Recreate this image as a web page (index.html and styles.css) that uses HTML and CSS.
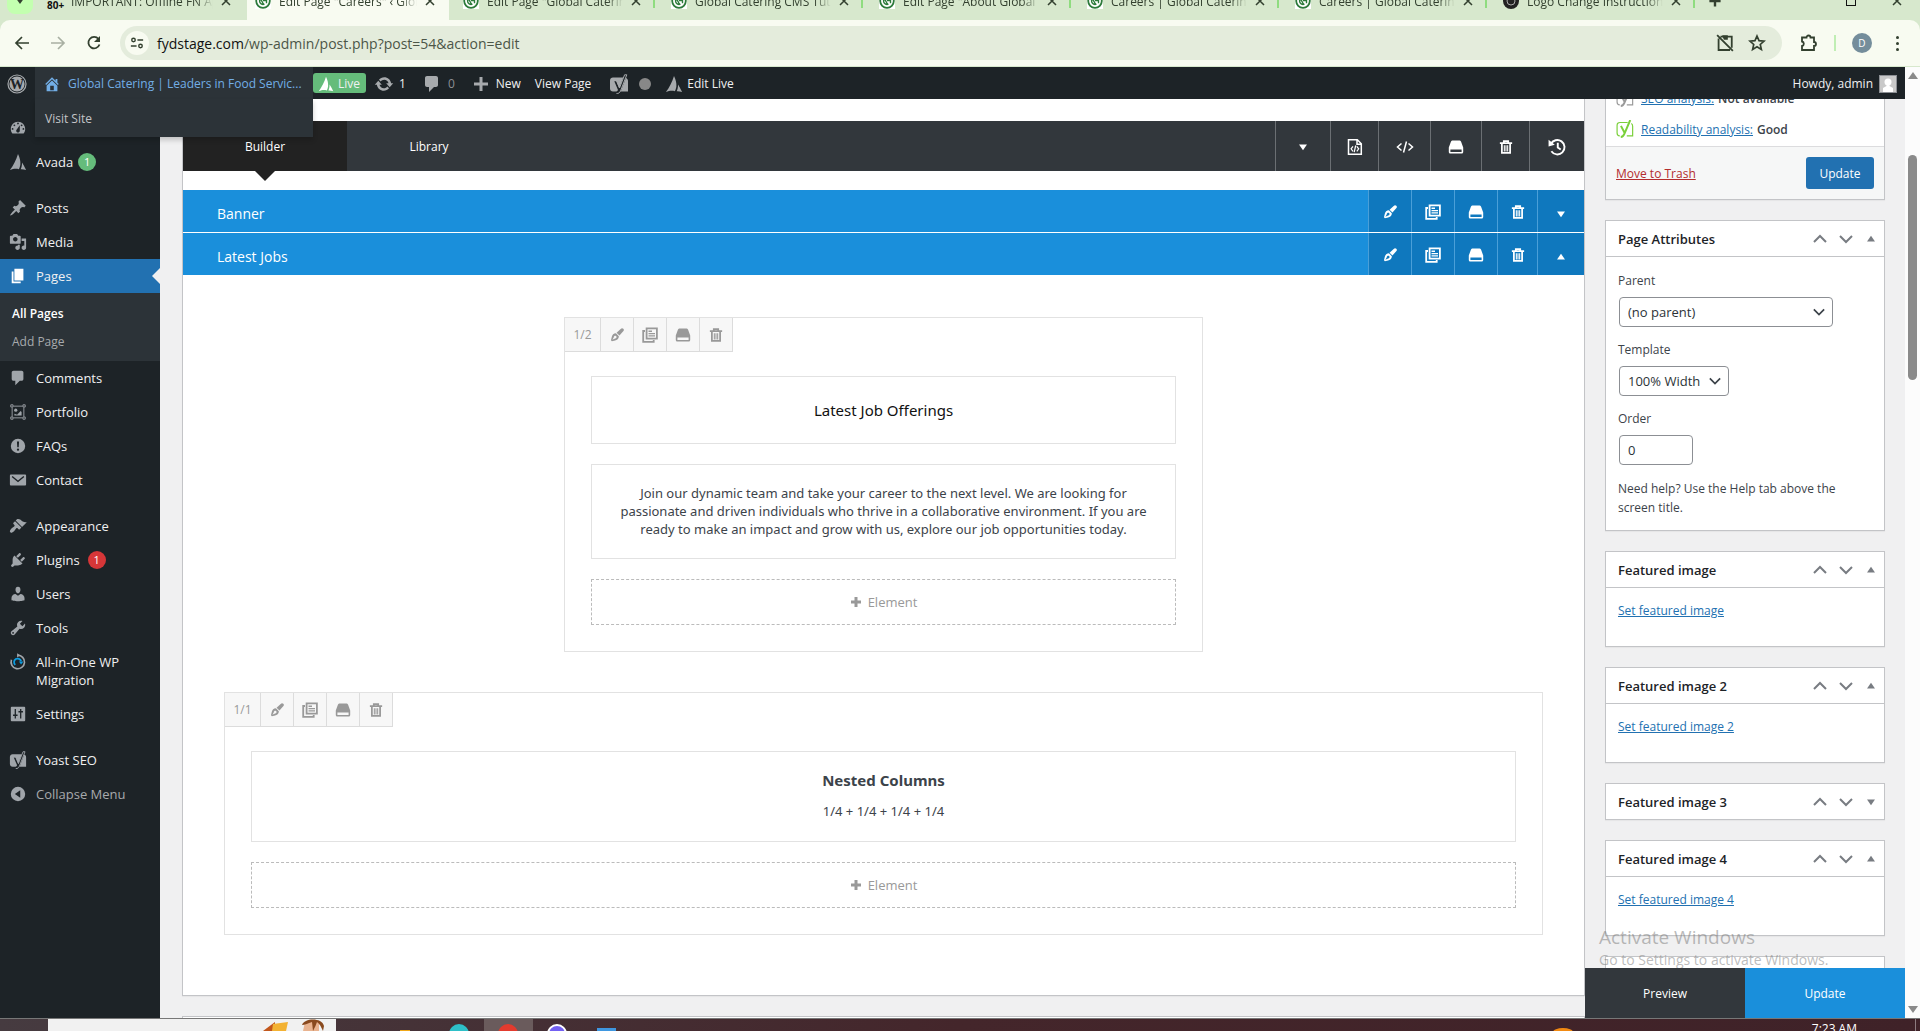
FILE: index.html
```html
<!DOCTYPE html>
<html lang="en">
<head>
  <meta charset="UTF-8" />
  <meta name="viewport" content="width=device-width, initial-scale=1.0"/>
  <title>Edit Page "Careers" ‹ Global Catering</title>
  <link rel="stylesheet" href="styles.css">
</head>
<body>
  <svg class="sprite" aria-hidden="true">
    <!-- admin menu -->
    <symbol id="i-wp" viewBox="0 0 20 20"><circle cx="10" cy="10" r="9" fill="none" stroke="currentColor" stroke-width="1.2"/><circle cx="10" cy="10" r="7.6"/><text class="wp-w" x="10" y="15" text-anchor="middle">W</text></symbol>
    <symbol id="i-dash" viewBox="0 0 20 20"><path fill-rule="evenodd" d="M3.76 16h12.48c1.1-1.37 1.76-3.11 1.76-5 0-4.42-3.58-8-8-8s-8 3.58-8 8c0 1.89.66 3.63 1.76 5zM10 4c.55 0 1 .45 1 1s-.45 1-1 1-1-.45-1-1 .45-1 1-1zM6 6c.55 0 1 .45 1 1s-.45 1-1 1-1-.45-1-1 .45-1 1-1zm8 0c.55 0 1 .45 1 1s-.45 1-1 1-1-.45-1-1 .45-1 1-1zm-5.37 5.55L12 7v6c0 1.1-.9 2-2 2s-2-.9-2-2c0-.57.24-1.08.63-1.45zM4 10c.55 0 1 .45 1 1s-.45 1-1 1-1-.45-1-1 .45-1 1-1zm12 0c.55 0 1 .45 1 1s-.45 1-1 1-1-.45-1-1 .45-1 1-1z"/></symbol>
    <symbol id="i-avada" viewBox="0 0 20 20"><path d="M10 1c2 4 3 8 2.600 12-.3 2-1 3.600-1.600 5-3-.8-6-.8-10 1C4.500 14 8 8 10 1zM14.500 10.500c1.500 2.500 3 5 4.500 8.500-2-.7-4-1-6-.9 1-2.300 1.500-4.600 1.500-7.600z"/></symbol>
    <symbol id="i-pin" viewBox="0 0 20 20"><path d="M10.440 3.020l1.820-1.820 6.360 6.350-1.830 1.820c-1.050-.68-2.480-.57-3.410.36l-.75.75c-.92.93-1.040 2.350-.35 3.410l-1.830 1.820-2.410-2.410-2.800 2.790c-.42.42-3.380 2.710-3.800 2.290s1.860-3.390 2.280-3.810l2.790-2.790L4.100 9.360l1.830-1.820c1.050.69 2.480.57 3.400-.36l.75-.75c.93-.92 1.050-2.350.36-3.410z"/></symbol>
    <symbol id="i-media" viewBox="0 0 20 20"><path fill-rule="evenodd" d="M13 11V4c0-.55-.45-1-1-1h-1.670L9 1H5L3.670 3H2c-.55 0-1 .45-1 1v7c0 .55.45 1 1 1h10c.55 0 1-.45 1-1zM7 4.500c1.380 0 2.500 1.120 2.500 2.500S8.380 9.500 7 9.500 4.500 8.380 4.500 7 5.620 4.500 7 4.500zM14 6h5v10.500c0 1.380-1.120 2.500-2.500 2.500S14 17.880 14 16.500s1.120-2.500 2.500-2.500c.17 0 .34.02.5.05V9h-3V6zm-4 8.050V13h2v3.500c0 1.380-1.120 2.500-2.500 2.500S7 17.880 7 16.500 8.120 14 9.500 14c.17 0 .34.02.5.05z"/></symbol>
    <symbol id="i-page" viewBox="0 0 20 20"><path d="M6 15V2h10v13H6zm-1 1h8v2H3V5h2v11z"/></symbol>
    <symbol id="i-comment" viewBox="0 0 20 20"><path d="M5 2h9c1.100 0 2 .9 2 2v7c0 1.100-.9 2-2 2h-2l-5 5v-5H5c-1.100 0-2-.9-2-2V4c0-1.100.9-2 2-2z"/></symbol>
    <symbol id="i-portfolio" viewBox="0 0 20 20"><path fill="none" stroke="currentColor" d="M3.500 5v10M16.500 5v10M5 3.500h10M5 16.500h10M2 2h2.500v2.500H2zM15.500 2H18v2.500h-2.500zM2 15.500h2.500V18H2zM15.500 15.500H18V18h-2.500z"/><circle cx="7.500" cy="8" r="1.800"/><path d="M6 14v-2l3 1 4-4 1 1v4z"/></symbol>
    <symbol id="i-faq" viewBox="0 0 20 20"><path fill-rule="evenodd" d="M10 2a8 8 0 100 16 8 8 0 000-16zM8.800 5h2.400l-.4 6.500H9.200zM10 12.700a1.300 1.300 0 110 2.600 1.300 1.300 0 010-2.600z"/></symbol>
    <symbol id="i-mail" viewBox="0 0 20 20"><path fill-rule="evenodd" d="M2 4h16c.6 0 1 .4 1 1v10c0 .6-.4 1-1 1H2c-.6 0-1-.4-1-1V5c0-.6.4-1 1-1zm2 1.500L3 6.600l7 6 7-6-1-1.100-6 5z"/></symbol>
    <symbol id="i-brush" viewBox="0 0 20 20"><path d="M14.480 11.060L7.410 3.990l1.500-1.500c.5-.56 2.300-.47 3.510.32 1.210.8 1.430 1.280 2.910 2.100 1.180.64 2.450 1.260 4.450.85zm-.71.71L6.700 4.700 4.930 6.470c-.39.39-.39 1.020 0 1.410l1.060 1.060c.39.39.39 1.030 0 1.420-.6.6-1.430 1.110-2.210 1.690-.35.26-.7.53-1.010.84C1.430 14.230.4 16.080 1.400 17.070c.99 1 2.840-.03 4.180-1.360.31-.31.58-.66.85-1.020.57-.78 1.080-1.610 1.690-2.210.39-.39 1.020-.39 1.410 0l1.060 1.060c.39.39 1.020.39 1.410 0z"/></symbol>
    <symbol id="i-plug" viewBox="0 0 20 20"><path d="M13.110 4.360L9.870 7.600 8 5.730l3.240-3.240c.35-.34 1.050-.2 1.560.32.52.51.66 1.210.31 1.550zm-8 1.770l.91-1.120 9.010 9.010-1.190.84c-.71.71-2.630 1.160-3.820 1.160H6.140L4.900 17.260c-.59.59-1.540.59-2.120 0-.59-.58-.59-1.530 0-2.120l1.240-1.240v-3.880c0-1.130.4-3.190 1.090-3.890zm7.260 3.970l3.240-3.240c.34-.35 1.040-.21 1.550.31.52.51.66 1.210.31 1.550l-3.240 3.250z"/></symbol>
    <symbol id="i-user" viewBox="0 0 20 20"><path d="M10 9.250c-2.270 0-2.730-3.440-2.730-3.440C7 4.020 7.820 2 9.970 2c2.160 0 2.980 2.020 2.710 3.810 0 0-.41 3.440-2.680 3.440zm0 2.570L12.720 10c2.390 0 4.520 2.330 4.520 4.530v2.490s-3.650 1.130-7.240 1.130c-3.650 0-7.240-1.130-7.240-1.130v-2.490c0-2.250 1.940-4.480 4.470-4.480z"/></symbol>
    <symbol id="i-tool" viewBox="0 0 20 20"><path fill-rule="evenodd" d="M16.680 9.770c-1.340 1.340-3.300 1.670-4.950.99l-5.410 6.520c-.99.99-2.590.99-3.580 0s-.99-2.590 0-3.570l6.520-5.420c-.68-1.650-.35-3.610.99-4.950 1.280-1.280 3.120-1.620 4.720-1.060l-2.890 2.890 2.820 2.820 2.860-2.870c.53 1.580.18 3.390-1.080 4.650zM3.810 16.210c.4.39 1.040.39 1.430 0 .4-.4.4-1.040 0-1.430-.39-.4-1.030-.4-1.430 0-.39.39-.39 1.030 0 1.430z"/></symbol>
    <symbol id="i-migrate" viewBox="0 0 20 20"><path fill="none" stroke="currentColor" stroke-width="1.800" d="M9.500 2.500a7.500 7.500 0 11-6.800 5"/><path d="M9 .2l3.500 2.400L9 5z"/><path fill="none" stroke="#0d9ce0" stroke-width="2" d="M7 13.200a4 4 0 116.500-4"/><path fill="#0d9ce0" d="M11 9.500h5l-2.600 3.200z"/></symbol>
    <symbol id="i-sliders" viewBox="0 0 20 20"><path fill-rule="evenodd" d="M3 2h14c.6 0 1 .4 1 1v14c0 .6-.4 1-1 1H3c-.6 0-1-.4-1-1V3c0-.6.4-1 1-1zm3.300 2.500v6H4.500v1.600h1.800v3h1.400v-3h1.800v-1.600H7.700v-6zm6 0v2.200h-1.800v1.600h1.800v6.800h1.400V8.300h1.800V6.700h-1.800V4.500z"/></symbol>
    <symbol id="i-yoast" viewBox="0 0 20 20"><path fill-rule="evenodd" d="M4 3.500h10.300l-4 10.700-2.800-7H5.300l3.700 8.700c-.7 1.300-1.200 1.600-2.600 1.600H4c-1.700 0-3-1.300-3-3v-8c0-1.700 1.300-3 3-3zM17 4c1.200.5 2 1.500 2 3v10.500h-7.300z"/><path fill="none" stroke="currentColor" stroke-width="1" d="M4.500 6.500h2.800l3.200 7.500L15.600.8h2.200L11.500 17c-.8 1.900-2 2.600-4 2.500"/></symbol>
    <symbol id="i-yoast-line" viewBox="0 0 20 20"><g fill="none" stroke="currentColor"><path stroke-width="1.300" d="M13 2.800H4.500C2.300 2.800 1.200 4 1.200 6v8.500c0 2 1 3.200 3 3.200M12 17.700h6.500V7c0-1.500-.5-2.700-1.500-3.200"/><path stroke-width="2.200" d="M5.500 6.500l4.300 8.200M15.800 0L9.300 15.500c-.9 2.200-2 3.300-4 3.400"/></g></symbol>
    <symbol id="i-collapse" viewBox="0 0 20 20"><path fill-rule="evenodd" d="M10 2a8 8 0 100 16 8 8 0 000-16zm2.500 3.800v8.400L6.500 10z"/></symbol>
    <symbol id="i-home" viewBox="0 0 20 20"><path fill-rule="evenodd" d="M16 8.500l1.530 1.530-1.060 1.060L10 4.600l-6.470 6.490-1.060-1.060L10 2.500l4 4v-2h2v4zm-6-2.460l6 5.990V18H4v-5.970zM12 17v-5H8v5h4z"/></symbol>
    <symbol id="i-update" viewBox="0 0 20 20"><path d="M10.200 3.280c3.530 0 6.430 2.610 6.920 6h2.080l-3.500 4-3.500-4h2.320c-.45-1.970-2.210-3.450-4.320-3.450-1.450 0-2.730.71-3.540 1.780L4.950 5.660C6.230 4.200 8.110 3.280 10.200 3.280zm-.4 13.440c-3.520 0-6.430-2.610-6.920-6H.8l3.500-4c1.170 1.330 2.330 2.670 3.500 4H5.480c.45 1.970 2.210 3.450 4.320 3.450 1.450 0 2.730-.71 3.540-1.780l1.710 1.950c-1.280 1.460-3.150 2.380-5.250 2.380z"/></symbol>
    <symbol id="i-plus" viewBox="0 0 20 20"><path d="M8.500 3h3v5.500H17v3h-5.500V17h-3v-5.500H3v-3h5.500z"/></symbol>

    <!-- builder tools -->
    <symbol id="i-paint" viewBox="0 0 16 16"><path fill-rule="evenodd" d="M15.200.9c1 .9.700 2-.1 2.900L10.800 8.600 7.500 5.400 12.200 1c.9-.8 2.100-1 3-.1zM6.800 6l3.300 3.300c.2 2.700-2 4.600-4.300 5l-3.600.7-1.100-.9.900-3.900C2.500 8 4.200 6 6.800 6zM6 8.900c-.9 0-1.600.7-1.600 1.500 0 .4-.3.900-.8 1.500L2.700 13.400l1.800-.9c.5-.4 1-.6 1.500-.6.900 0 1.500-.7 1.500-1.500S6.900 8.900 6 8.900z"/></symbol>
    <symbol id="i-clone" viewBox="0 0 16 16"><path fill="none" stroke="currentColor" stroke-width="1.800" d="M4.600 1.400h10.300v10.200H4.600zM3 4H1.200v10.800h10.500V13"/><path d="M6.500 3.600H10V5H6.500zM6.500 5.900h6.500v1.300H6.500zM6.500 8.200h6.500v1.300H6.500z"/></symbol>
    <symbol id="i-drive" viewBox="0 0 16 16"><path fill-rule="evenodd" d="M5 1.500h6c1 0 1.800.5 2.200 1.400l2 5.600v4.500c0 .8-.6 1.500-1.400 1.500H2.200C1.400 14.500.8 13.800.8 13V8.500l2-5.600C3.200 2 4 1.500 5 1.500zM2.400 10.600v2.300h11.200v-2.300z"/></symbol>
    <symbol id="i-trash" viewBox="0 0 16 16"><path fill="none" stroke="currentColor" stroke-width="2" d="M1 3.500h14M5.500 3V1.300h5V3M3.300 4v10.700h9.400V4"/><path fill="none" stroke="currentColor" stroke-width="1.200" d="M6.100 6v7M8 6v7M9.900 6v7"/></symbol>
    <symbol id="i-file" viewBox="0 0 16 16"><path fill="none" stroke="currentColor" stroke-width="1.500" d="M1.500.8h8.800l4 4v10.400H1.500zM10 1v4.200h4"/><path fill="none" stroke="currentColor" stroke-width="1.200" d="M6 7.300L4.100 9.800 6 12.300M9.800 7.300l1.900 2.500-1.900 2.500M8.700 6.500l-1.500 6.700"/></symbol>
    <symbol id="i-code" viewBox="0 0 18 16"><path fill="none" stroke="currentColor" stroke-width="1.500" d="M5.500 4.500L1.500 8l4 3.500M12.500 4.500l4 3.500-4 3.500M10.500 2.500l-3 11"/></symbol>
    <symbol id="i-history" viewBox="0 0 16 16"><path fill="none" stroke="currentColor" stroke-width="1.700" d="M2.500 5.500A6.400 6.400 0 113 11.800M8.700 4.200v4.300l2.600 1.700"/><path d="M.5 1.500v6L6 6z"/></symbol>
    <symbol id="i-add" viewBox="0 0 12 12"><path d="M4.500 1h3v3.500H11v3H7.500V11h-3V7.500H1v-3h3.500z"/></symbol>
    <symbol id="i-down" viewBox="0 0 10 10"><path d="M0 2h10L5 9z"/></symbol>
    <symbol id="i-up" viewBox="0 0 10 10"><path d="M0 8h10L5 1z"/></symbol>
    <symbol id="i-chev-down" viewBox="0 0 14 14"><path fill="none" stroke="currentColor" stroke-width="2" d="M1 4l6 6 6-6"/></symbol>
    <symbol id="i-chev-up" viewBox="0 0 14 14"><path fill="none" stroke="currentColor" stroke-width="2" d="M1 10l6-6 6 6"/></symbol>

    <!-- browser -->
    <symbol id="i-gc" viewBox="0 0 16 16"><path fill="#fff" d="M0 0h16v16H0z"/><circle cx="8" cy="8" r="6.800" fill="none" stroke="#2c7a3a" stroke-width="1.800"/><path fill="none" stroke="#2c7a3a" stroke-width="1.400" d="M9.500 4.800a3.500 3.500 0 100 6.400M8 7.500h3.500v2.800M5 5.500c2 2 2 4 4 6"/></symbol>
    <symbol id="i-x" viewBox="0 0 10 10"><path fill="none" stroke="currentColor" stroke-width="1.500" d="M1 1l8 8M9 1L1 9"/></symbol>
    <symbol id="i-back" viewBox="0 0 16 16"><path fill="none" stroke="currentColor" stroke-width="1.700" d="M15 8H2.500M8 2L2 8l6 6"/></symbol>
    <symbol id="i-fwd" viewBox="0 0 16 16"><path fill="none" stroke="currentColor" stroke-width="1.700" d="M1 8h12.500M8 2l6 6-6 6"/></symbol>
    <symbol id="i-reload" viewBox="0 0 16 16"><path fill="none" stroke="currentColor" stroke-width="1.800" d="M13.500 9.500A5.700 5.700 0 1112.500 4"/><path d="M14 1v6H8z"/></symbol>
    <symbol id="i-tune" viewBox="0 0 16 16"><g fill="none" stroke="currentColor" stroke-width="1.600"><circle cx="4" cy="4.500" r="2"/><circle cx="12" cy="11.500" r="2"/><path d="M8.500 4.500H15M1 11.500h6.500"/></g></symbol>
    <symbol id="i-clip" viewBox="0 0 16 16"><path fill="none" stroke="currentColor" stroke-width="1.600" d="M4 2.300h10v10M12.500 14.200H2.300V4M1 1l14 14"/><path d="M5.500 1h5v4H7z"/></symbol>
    <symbol id="i-star" viewBox="0 0 16 16"><path fill="none" stroke="currentColor" stroke-width="1.500" d="M8 1.800l1.800 4.100 4.500.4-3.400 3 1 4.400L8 11.400l-3.900 2.300 1-4.400-3.400-3 4.500-.4z"/></symbol>
    <symbol id="i-puzzle" viewBox="0 0 18 18"><path fill="none" stroke="currentColor" stroke-width="1.800" d="M2 3.500h4.500a2 2 0 014 0H14V8a2 2 0 010 4v4H2v-4a2.300 2.300 0 000-4.500z"/></symbol>
  </svg>

  <header class="browser">
    <div class="tab-strip">
      <button class="tab-search" aria-label="Search tabs"><svg class="ico10"><use href="#i-down"/></svg></button>
      <div class="tab tab-first"><b class="count">80+</b><span class="tab-title">IMPORTANT: Offline FN Ap</span><svg class="ico10"><use href="#i-x"/></svg></div>
      <div class="tab tab-active"><svg class="ico16"><use href="#i-gc"/></svg><span class="tab-title">Edit Page "Careers" ‹ Global</span><svg class="ico10"><use href="#i-x"/></svg></div>
      <div class="tab"><svg class="ico16"><use href="#i-gc"/></svg><span class="tab-title">Edit Page "Global Catering C</span><svg class="ico10"><use href="#i-x"/></svg></div>
      <div class="tab"><svg class="ico16"><use href="#i-gc"/></svg><span class="tab-title">Global Catering CMS Tutorial</span><svg class="ico10"><use href="#i-x"/></svg></div>
      <div class="tab"><svg class="ico16"><use href="#i-gc"/></svg><span class="tab-title">Edit Page "About Global Cat</span><svg class="ico10"><use href="#i-x"/></svg></div>
      <div class="tab"><svg class="ico16"><use href="#i-gc"/></svg><span class="tab-title">Careers | Global Catering |</span><svg class="ico10"><use href="#i-x"/></svg></div>
      <div class="tab"><svg class="ico16"><use href="#i-gc"/></svg><span class="tab-title">Careers | Global Catering |</span><svg class="ico10"><use href="#i-x"/></svg></div>
      <div class="tab"><svg class="ico16" viewBox="0 0 16 16"><circle cx="8" cy="8" r="8" fill="#222"/><circle cx="8" cy="8" r="4" fill="none" stroke="#aaa"/></svg><span class="tab-title">Logo Change Instructions</span><svg class="ico10"><use href="#i-x"/></svg></div>
      <button class="tab-new" aria-label="New tab"><svg class="ico16"><use href="#i-plus"/></svg></button>
      <div class="win-buttons"><span class="win-max"></span><svg class="ico10"><use href="#i-x"/></svg></div>
    </div>
    <div class="toolbar">
      <button aria-label="Back"><svg class="ico16"><use href="#i-back"/></svg></button>
      <button class="off" aria-label="Forward"><svg class="ico16"><use href="#i-fwd"/></svg></button>
      <button aria-label="Reload"><svg class="ico16"><use href="#i-reload"/></svg></button>
      <div class="omnibox">
        <span class="tune"><svg class="ico16"><use href="#i-tune"/></svg></span>
        <span class="url"><b>fydstage.com</b>/wp-admin/post.php?post=54&amp;action=edit</span>
        <svg class="ico18"><use href="#i-clip"/></svg>
        <svg class="ico18"><use href="#i-star"/></svg>
      </div>
      <svg class="ico18 puzzle"><use href="#i-puzzle"/></svg>
      <span class="divider"></span>
      <span class="profile">D</span>
      <span class="dots"><i></i><i></i><i></i></span>
    </div>
  </header>

  <div class="viewport">
    <div class="wp">
      <nav class="adminbar">
        <a href="#" class="bar-wp" aria-label="About WordPress"><svg class="ico20"><use href="#i-wp"/></svg></a>
        <div class="bar-site">
          <a href="#"><svg class="ico18"><use href="#i-home"/></svg>Global Catering | Leaders in Food Servic...</a>
          <div class="bar-menu"><a href="#">Visit Site</a></div>
        </div>
        <a href="#" class="live"><svg class="ico16"><use href="#i-avada"/></svg>Live</a>
        <a href="#" class="bar-updates"><svg class="ico20"><use href="#i-update"/></svg>1</a>
        <a href="#" class="bar-comments"><svg class="ico20"><use href="#i-comment"/></svg>0</a>
        <a href="#" class="bar-new"><svg class="ico20"><use href="#i-plus"/></svg>New</a>
        <a href="#" class="bar-view">View Page</a>
        <a href="#" class="bar-yoast"><svg class="ico20"><use href="#i-yoast"/></svg><i class="score"></i></a>
        <a href="#" class="bar-edit"><svg class="ico18"><use href="#i-avada"/></svg>Edit Live</a>
        <a href="#" class="howdy">Howdy, admin<svg class="avatar" viewBox="0 0 16 16"><path fill="#c9c9c9" d="M0 0h16v16H0z"/><circle cx="8" cy="6" r="3.500" fill="#fff"/><path fill="#fff" d="M6.500 8h3v2l3.500 2v4H3v-4l3.500-2z"/></svg></a>
      </nav>

      <div class="wp-body">
        <ul class="menu">
          <li><a href="#" aria-label="Dashboard"><svg class="ico20"><use href="#i-dash"/></svg></a></li>
          <li><a href="#"><svg class="ico20"><use href="#i-avada"/></svg>Avada<span class="bubble green">1</span></a></li>
          <li class="sep"></li>
          <li><a href="#"><svg class="ico20"><use href="#i-pin"/></svg>Posts</a></li>
          <li><a href="#"><svg class="ico20"><use href="#i-media"/></svg>Media</a></li>
          <li class="current"><a href="#"><svg class="ico20"><use href="#i-page"/></svg>Pages</a>
            <ul class="submenu">
              <li><a href="#" class="on">All Pages</a></li>
              <li><a href="#">Add Page</a></li>
            </ul>
          </li>
          <li><a href="#"><svg class="ico20"><use href="#i-comment"/></svg>Comments</a></li>
          <li><a href="#"><svg class="ico20"><use href="#i-portfolio"/></svg>Portfolio</a></li>
          <li><a href="#"><svg class="ico20"><use href="#i-faq"/></svg>FAQs</a></li>
          <li><a href="#"><svg class="ico20"><use href="#i-mail"/></svg>Contact</a></li>
          <li class="sep"></li>
          <li><a href="#"><svg class="ico20"><use href="#i-brush"/></svg>Appearance</a></li>
          <li><a href="#"><svg class="ico20"><use href="#i-plug"/></svg>Plugins<span class="bubble">1</span></a></li>
          <li><a href="#"><svg class="ico20"><use href="#i-user"/></svg>Users</a></li>
          <li><a href="#"><svg class="ico20"><use href="#i-tool"/></svg>Tools</a></li>
          <li><a href="#"><svg class="ico20"><use href="#i-migrate"/></svg>All-in-One WP Migration</a></li>
          <li><a href="#"><svg class="ico20"><use href="#i-sliders"/></svg>Settings</a></li>
          <li class="sep"></li>
          <li><a href="#"><svg class="ico20"><use href="#i-yoast"/></svg>Yoast SEO</a></li>
          <li class="collapse"><a href="#"><svg class="ico20"><use href="#i-collapse"/></svg>Collapse Menu</a></li>
        </ul>

        <main class="content">
          <section class="builder">
            <div class="builder-head">
              <button class="builder-tab active">Builder</button>
              <button class="builder-tab">Library</button>
              <div class="head-tools">
                <button aria-label="Toggle all"><svg class="ico8"><use href="#i-down"/></svg></button>
                <button aria-label="Page CSS"><svg class="ico16"><use href="#i-file"/></svg></button>
                <button aria-label="Shortcodes"><svg class="ico18"><use href="#i-code"/></svg></button>
                <button aria-label="Save"><svg class="ico16"><use href="#i-drive"/></svg></button>
                <button aria-label="Delete"><svg class="ico14"><use href="#i-trash"/></svg></button>
                <button aria-label="History"><svg class="ico18"><use href="#i-history"/></svg></button>
              </div>
            </div>

            <div class="bar">
              <h2>Banner</h2>
              <div class="bar-tools">
                <button aria-label="Edit"><svg class="ico14"><use href="#i-paint"/></svg></button>
                <button aria-label="Clone"><svg class="ico16"><use href="#i-clone"/></svg></button>
                <button aria-label="Save"><svg class="ico16"><use href="#i-drive"/></svg></button>
                <button aria-label="Delete"><svg class="ico14"><use href="#i-trash"/></svg></button>
                <button aria-label="Expand"><svg class="ico8"><use href="#i-down"/></svg></button>
              </div>
            </div>
            <div class="bar">
              <h2>Latest Jobs</h2>
              <div class="bar-tools">
                <button aria-label="Edit"><svg class="ico14"><use href="#i-paint"/></svg></button>
                <button aria-label="Clone"><svg class="ico16"><use href="#i-clone"/></svg></button>
                <button aria-label="Save"><svg class="ico16"><use href="#i-drive"/></svg></button>
                <button aria-label="Delete"><svg class="ico14"><use href="#i-trash"/></svg></button>
                <button aria-label="Collapse"><svg class="ico8"><use href="#i-up"/></svg></button>
              </div>
            </div>

            <div class="columns">
              <div class="column half">
                <div class="column-tools">
                  <button class="size">1/2</button>
                  <button aria-label="Edit"><svg class="ico14"><use href="#i-paint"/></svg></button>
                  <button aria-label="Clone"><svg class="ico16"><use href="#i-clone"/></svg></button>
                  <button aria-label="Save"><svg class="ico16"><use href="#i-drive"/></svg></button>
                  <button aria-label="Delete"><svg class="ico14"><use href="#i-trash"/></svg></button>
                </div>
                <div class="column-body">
                  <div class="element title-element">Latest Job Offerings</div>
                  <div class="element text-element">Join our dynamic team and take your career to the next level. We are looking for passionate and driven individuals who thrive in a collaborative environment. If you are ready to make an impact and grow with us, explore our job opportunities today.</div>
                  <button class="add-element"><svg class="ico12"><use href="#i-add"/></svg>Element</button>
                </div>
              </div>

              <div class="column">
                <div class="column-tools">
                  <button class="size">1/1</button>
                  <button aria-label="Edit"><svg class="ico14"><use href="#i-paint"/></svg></button>
                  <button aria-label="Clone"><svg class="ico16"><use href="#i-clone"/></svg></button>
                  <button aria-label="Save"><svg class="ico16"><use href="#i-drive"/></svg></button>
                  <button aria-label="Delete"><svg class="ico14"><use href="#i-trash"/></svg></button>
                </div>
                <div class="column-body">
                  <div class="element nested-element">
                    <h4>Nested Columns</h4>
                    <p>1/4 + 1/4 + 1/4 + 1/4</p>
                  </div>
                  <button class="add-element"><svg class="ico12"><use href="#i-add"/></svg>Element</button>
                </div>
              </div>
            </div>
          </section>
          <section class="next-box"></section>
        </main>

        <aside class="side">
          <section class="postbox publish">
            <p class="analysis"><svg class="ico18 grey"><use href="#i-yoast-line"/></svg><a href="#">SEO analysis:</a> <b>Not available</b></p>
            <p class="analysis"><svg class="ico18 good"><use href="#i-yoast-line"/></svg><a href="#">Readability analysis:</a> <b>Good</b></p>
            <div class="publish-actions">
              <a href="#" class="trash-link">Move to Trash</a>
              <button class="btn-update">Update</button>
            </div>
          </section>

          <section class="postbox">
            <div class="box-head"><h2>Page Attributes</h2><svg class="ico14"><use href="#i-chev-up"/></svg><svg class="ico14"><use href="#i-chev-down"/></svg><svg class="ico8"><use href="#i-up"/></svg></div>
            <div class="box-body attributes">
              <label for="parent">Parent</label>
              <div class="select select-parent"><select id="parent"><option>(no parent)</option></select><svg class="ico12"><use href="#i-chev-down"/></svg></div>
              <label for="template">Template</label>
              <div class="select select-template"><select id="template"><option>100% Width</option></select><svg class="ico12"><use href="#i-chev-down"/></svg></div>
              <label for="order">Order</label>
              <input type="text" id="order" value="0" />
              <p>Need help? Use the Help tab above the screen title.</p>
            </div>
          </section>

          <section class="postbox">
            <div class="box-head"><h2>Featured image</h2><svg class="ico14"><use href="#i-chev-up"/></svg><svg class="ico14"><use href="#i-chev-down"/></svg><svg class="ico8"><use href="#i-up"/></svg></div>
            <div class="box-body featured"><a href="#">Set featured image</a></div>
          </section>
          <section class="postbox">
            <div class="box-head"><h2>Featured image 2</h2><svg class="ico14"><use href="#i-chev-up"/></svg><svg class="ico14"><use href="#i-chev-down"/></svg><svg class="ico8"><use href="#i-up"/></svg></div>
            <div class="box-body featured"><a href="#">Set featured image 2</a></div>
          </section>
          <section class="postbox closed">
            <div class="box-head"><h2>Featured image 3</h2><svg class="ico14"><use href="#i-chev-up"/></svg><svg class="ico14"><use href="#i-chev-down"/></svg><svg class="ico8"><use href="#i-down"/></svg></div>
          </section>
          <section class="postbox">
            <div class="box-head"><h2>Featured image 4</h2><svg class="ico14"><use href="#i-chev-up"/></svg><svg class="ico14"><use href="#i-chev-down"/></svg><svg class="ico8"><use href="#i-up"/></svg></div>
            <div class="box-body featured"><a href="#">Set featured image 4</a></div>
          </section>
          <section class="postbox"><div class="box-head"></div></section>
        </aside>
      </div>

      <div class="sticky">
        <div class="watermark"><strong>Activate Windows</strong><span>Go to Settings to activate Windows.</span></div>
        <div class="sticky-buttons">
          <button>Preview</button>
          <button class="primary">Update</button>
        </div>
      </div>
    </div>

    <div class="scrollbar">
      <svg class="ico10"><use href="#i-up"/></svg>
      <div class="track"><div class="thumb"></div></div>
      <svg class="ico10"><use href="#i-down"/></svg>
    </div>
  </div>

  <footer class="taskbar">
    <div class="task-search">
      <svg viewBox="0 0 64 12"><path fill="#c2571c" d="M0 12L12 3v9z"/><path fill="#f3b233" d="M10 5l15-2-2 9H9z"/><path fill="#e9b38f" d="M42 3h14v9H40z"/><path fill="#8a4a1e" d="M39 6c2-7 20-8 22 1l-1 5c-2-4-3-7-6-9-1 3-2 5-4 9l-1-9c-4 1-7 3-10 3z"/></svg>
    </div>
    <div class="tasks">
      <span><svg viewBox="0 0 49 12"><path fill="#f0a818" d="M14 11h10v1H14z"/></svg></span>
      <span><svg viewBox="0 0 49 12"><circle cx="24" cy="15" r="10" fill="#2ec0c8"/></svg></span>
      <span class="on"><svg viewBox="0 0 49 12"><circle cx="24" cy="15" r="10" fill="#e33b2e"/></svg></span>
      <span><svg viewBox="0 0 49 12"><circle cx="24" cy="15" r="9" fill="#7360f2" stroke="#fff" stroke-width="2"/></svg></span>
      <span><svg viewBox="0 0 49 12"><path fill="#3f97e0" d="M15 9h19v3H15z"/></svg></span>
    </div>
    <svg class="tray" viewBox="0 0 24 12"><ellipse cx="12" cy="13" rx="10" ry="4" fill="#f28a12"/></svg>
    <time>7:23 AM</time>
    <span class="show-desktop"></span>
  </footer>
</body>
</html>
```

FILE: styles.css
```css
:root {
  --dark: #1d2327;
  --dark-2: #2c3338;
  --blue: #1a8fdb;
  --blue-2: #0f78be;
  --wp-blue: #2271b1;
  --border: #c3c4c7;
  --light: #e2e2e2;
  --text: #3c434a;
}

* {
  box-sizing: border-box;
}

body {
  display: flex;
  flex-direction: column;
  height: 100vh;
  margin: 0;
  overflow: hidden;
  font-family: "Open Sans", "Noto Sans", sans-serif;
  font-size: 12px;
  color: var(--text);
  background: #f0f0f1;
}

a {
  color: var(--wp-blue);
}

button {
  display: flex;
  align-items: center;
  justify-content: center;
  padding: 0;
  border: 0;
  background: none;
  color: inherit;
  font: inherit;
  cursor: pointer;
}

h2, h4, p, ul {
  margin: 0;
  padding: 0;
}

ul {
  list-style: none;
}

svg {
  flex: none;
  fill: currentColor;
}

.sprite {
  position: absolute;
  width: 0;
  height: 0;
}

.wp-w {
  font: bold 14px "Liberation Serif", serif;
  fill: var(--dark);
}

.ico8 { width: 8px; height: 8px; }
.ico10 { width: 10px; height: 10px; }
.ico12 { width: 12px; height: 12px; }
.ico14 { width: 14px; height: 14px; }
.ico16 { width: 16px; height: 16px; }
.ico18 { width: 18px; height: 18px; }
.ico20 { width: 20px; height: 20px; }

/* browser */
.browser {
  flex: none;
  background: #d7e8cd;
  color: #33402f;
}

.tab-strip {
  display: flex;
  align-items: flex-end;
  height: 20px;
  overflow: hidden;
}

.tab-search {
  width: 26px;
  height: 28px;
  margin: 0 6px 6px 7px;
  border-radius: 8px;
  background: #c3ffb0;
}

.tab {
  display: flex;
  align-items: center;
  gap: 8px;
  flex: 0 1 208px;
  min-width: 0;
  height: 38px;
  padding: 0 16px 0 8px;
}

.tab + .tab:not(.tab-active) {
  padding-left: 14px;
}

.tab-active {
  flex-basis: 202px;
  padding-right: 14px;
  border-radius: 10px 10px 0 0;
  background: #f8fbf1;
}

.tab:not(.tab-first):not(.tab-active) {
  background: linear-gradient(#8fdc7f, #8fdc7f) right 2px top / 2px 26px no-repeat;
}

.tab-title {
  flex: 1;
  overflow: hidden;
  white-space: nowrap;
  -webkit-mask-image: linear-gradient(90deg, #000 88%, transparent);
  mask-image: linear-gradient(90deg, #000 88%, transparent);
}

.count {
  width: 16px;
  padding-top: 8px;
  font-size: 10px;
  color: #111;
}

.tab-new {
  width: 36px;
  height: 38px;
}

.win-buttons {
  display: flex;
  align-items: center;
  gap: 36px;
  height: 38px;
  margin-left: auto;
  padding-right: 18px;
}

.win-max {
  width: 10px;
  height: 10px;
  border: 1px solid #111;
}

.toolbar {
  display: flex;
  align-items: center;
  height: 47px;
  padding: 0 21px 0 14px;
  border-bottom: 1px solid #d7e8cd;
  border-radius: 10px 10px 0 0;
  background: #f8fbf1;
}

.toolbar > button {
  width: 16px;
  margin-right: 20px;
}

.toolbar > .off {
  color: #a9b0a3;
}

.toolbar > button:nth-child(3) {
  margin-right: 18px;
}

.omnibox {
  display: flex;
  align-items: center;
  flex: 1;
  gap: 14px;
  height: 34px;
  padding: 0 16px 0 5px;
  border-radius: 17px;
  background: #e4ecdc;
}

.tune {
  display: flex;
  align-items: center;
  justify-content: center;
  width: 24px;
  height: 24px;
  border-radius: 50%;
  background: #f8fbf1;
}

.tune svg {
  width: 14px;
  height: 14px;
}

.url {
  flex: 1;
  margin-left: -6px;
  font-size: 14px;
  color: #4c5648;
}

.url b {
  font-weight: 400;
  color: #111;
}

.puzzle {
  margin-left: 18px;
}

.divider {
  width: 2px;
  height: 16px;
  margin: 0 16px;
  background: #c0eeb4;
}

.profile {
  width: 20px;
  height: 20px;
  border-radius: 50%;
  background: #748d9b;
  color: #fff;
  font-size: 10px;
  line-height: 20px;
  text-align: center;
}

.dots {
  display: flex;
  flex-direction: column;
  gap: 3px;
  margin-left: 24px;
}

.dots i {
  width: 3px;
  height: 3px;
  border-radius: 50%;
  background: #33402f;
}

/* page */
.viewport {
  display: flex;
  flex: 1;
  min-height: 0;
}

.wp {
  position: relative;
  display: flex;
  flex-direction: column;
  flex: 1;
  min-width: 0;
}

.adminbar {
  position: relative;
  z-index: 5;
  display: flex;
  align-items: center;
  flex: none;
  height: 32px;
  padding: 0 8px 0 7px;
  background: var(--dark);
}

.adminbar a {
  display: flex;
  align-items: center;
  height: 32px;
  padding-top: 1px;
  color: #f0f0f1;
  line-height: 32px;
  text-decoration: none;
}

.adminbar svg {
  color: #a7aaad;
}

.bar-wp {
  width: 28px;
}

.bar-site {
  position: relative;
  width: 278px;
  background: var(--dark-2);
}

.bar-site > a {
  gap: 7px;
  padding-left: 8px;
}

.adminbar .bar-site > a,
.adminbar .bar-site > a svg {
  color: #72aee6;
}

.bar-menu {
  position: absolute;
  top: 32px;
  left: 0;
  width: 100%;
  padding: 3px 10px;
  background: var(--dark-2);
  box-shadow: 0 3px 5px rgba(0, 0, 0, 0.2);
}

.adminbar .bar-menu a {
  padding-top: 2px;
  color: #c3c4c7;
}

.adminbar .live {
  gap: 4px;
  height: 20px;
  width: 53px;
  padding-left: 5px;
  border-radius: 3px;
  background: #65bc7b;
}

.adminbar .live svg {
  color: #fff;
}

.bar-updates {
  gap: 5px;
  margin-left: 8px;
}

.adminbar .bar-comments {
  gap: 6px;
  margin-left: 16px;
  color: #8c8f94;
}

.bar-new {
  gap: 5px;
  margin-left: 16px;
}

.bar-view {
  margin-left: 14px;
}

.bar-yoast {
  gap: 10px;
  margin-left: 18px;
}

.score {
  width: 12px;
  height: 12px;
  border-radius: 50%;
  background: #888;
}

.bar-edit {
  gap: 4px;
  margin-left: 14px;
}

.howdy {
  gap: 6px;
  margin-left: auto;
}

.avatar {
  width: 18px;
  height: 18px;
  border: 1px solid #8c8f94;
}

.wp-body {
  display: flex;
  flex: 1;
  min-height: 0;
  overflow: hidden;
}

.menu {
  flex: none;
  width: 160px;
  padding-top: 12px;
  background: var(--dark);
  font-size: 13px;
}

.menu a {
  display: flex;
  gap: 8px;
  padding: 8px;
  color: #f0f0f1;
  line-height: 18px;
  text-decoration: none;
}

.menu svg {
  height: 18px;
  color: #a0a5aa;
}

.sep {
  height: 12px;
}

.current {
  position: relative;
}

.current > a {
  background: var(--wp-blue);
}

.menu .current > a svg {
  color: #fff;
}

.current::after {
  content: "";
  position: absolute;
  top: 9px;
  right: 0;
  border: 8px solid transparent;
  border-left: 0;
  border-right-color: #f0f0f1;
}

.submenu {
  padding: 6px 0;
  background: var(--dark-2);
}

.submenu a {
  padding: 6px 12px 4px;
  color: #a7aaad;
  font-size: 12px;
}

.submenu .on {
  color: #fff;
  font-weight: 600;
}

.bubble {
  width: 18px;
  height: 18px;
  border-radius: 50%;
  background: #d63638;
  color: #fff;
  font-size: 11px;
  line-height: 18px;
  text-align: center;
}

.bubble.green {
  margin-left: -3px;
  background: #65bc7b;
}

.collapse a {
  color: #a7aaad;
}

/* builder */
.content {
  flex: 1;
  min-width: 0;
  margin-left: 22px;
}

.builder {
  padding-top: 22px;
  border: 1px solid var(--border);
  border-top: 0;
  background: #fff;
  box-shadow: 0 1px 1px rgba(0, 0, 0, 0.04);
}

.builder-head {
  display: flex;
  height: 50px;
  margin-bottom: 19px;
  background: #32373c;
  color: #fff;
}

.builder-tab {
  position: relative;
  width: 164px;
}

.builder-tab.active {
  background: #222;
}

.builder-tab.active::after {
  content: "";
  position: absolute;
  top: 100%;
  left: 50%;
  margin-left: -10px;
  border: 10px solid transparent;
  border-top-color: #222;
  border-bottom: 0;
}

.head-tools, .bar-tools {
  display: flex;
  margin-left: auto;
}

.head-tools button {
  width: 48px;
  padding-top: 2px;
  border-left: 1px solid #6b6f73;
}

.head-tools button:first-child,
.head-tools button:last-child {
  width: 55px;
}

.head-tools button:nth-child(3) {
  width: 52px;
}

.head-tools button:nth-child(4) {
  width: 51px;
}

.bar {
  display: flex;
  height: 42px;
  margin-bottom: 1px;
  background: var(--blue);
  color: #fff;
}

.bar h2 {
  padding: 3px 0 0 34px;
  font-size: 14px;
  font-weight: 400;
  line-height: 42px;
}

.bar-tools {
  background: var(--blue-2);
}

.bar-tools button {
  width: 43px;
  padding-top: 2px;
  border-left: 1px solid #4a9fd8;
}

.bar-tools button:nth-child(4) {
  width: 40px;
}

.bar-tools button:last-child {
  width: 47px;
  padding-top: 6px;
}

.columns {
  display: flex;
  flex-direction: column;
  align-items: center;
  gap: 40px;
  padding: 41px 41px 60px;
}

.column {
  width: 100%;
  border: 1px solid var(--light);
}

.column.half {
  width: 639px;
  max-width: 100%;
}

.column-tools {
  display: flex;
  color: #999;
}

.column-tools button {
  width: 33px;
  height: 34px;
  border: solid #dcdcdc;
  border-width: 0 1px 1px 0;
  background: #f7f7f7;
}

.column-tools .size {
  width: 36px;
}

.column-body {
  display: flex;
  flex-direction: column;
  gap: 20px;
  padding: 24px 26px 26px;
}

.element {
  padding: 20px 26px;
  border: 1px solid var(--light);
  font-family: "Noto Sans", sans-serif;
  font-size: 13px;
  line-height: 18px;
  text-align: center;
}

.title-element {
  padding: 23px 26px;
  color: #111;
  font-size: 15px;
  line-height: 20px;
}

.text-element {
  padding: 19px 26px 20px;
}

.nested-element {
  padding: 19px 26px 21px;
}

.nested-element h4 {
  margin-bottom: 13px;
  font-size: 15px;
  line-height: 18px;
}

.add-element {
  gap: 6px;
  height: 46px;
  border: 1px dashed #bbb;
  color: #999;
  font-size: 13px;
}

.next-box {
  height: 60px;
  margin-top: 20px;
  border: 1px solid var(--border);
  background: #fff;
}

/* right column */
.side {
  flex: none;
  width: 320px;
  margin-top: -25px;
  padding: 0 20px;
}

.postbox {
  margin-bottom: 20px;
  border: 1px solid var(--border);
  background: #fff;
  box-shadow: 0 1px 1px rgba(0, 0, 0, 0.04);
}

.publish {
  padding-top: 13px;
}

.analysis {
  display: flex;
  align-items: center;
  gap: 4px;
  height: 20px;
  margin-bottom: 11px;
  padding-left: 10px;
}

.analysis svg {
  margin-right: 3px;
}

.analysis b {
  font-weight: 600;
}

.grey {
  color: #999;
}

.good {
  color: #7ad03a;
}

.publish-actions {
  display: flex;
  align-items: center;
  justify-content: space-between;
  height: 53px;
  margin-top: -4px;
  padding: 0 10px;
  border-top: 1px solid #dcdcde;
  background: #f6f7f7;
}

.trash-link {
  color: #b32d2e;
}

.btn-update {
  width: 68px;
  height: 32px;
  border-radius: 3px;
  background: var(--wp-blue);
  color: #fff;
}

.box-head {
  display: flex;
  align-items: center;
  gap: 12px;
  height: 35px;
  padding: 0 9px 0 12px;
  color: #787c82;
}

.box-head h2 {
  flex: 1;
  color: var(--dark);
  font-size: 13px;
  font-weight: 600;
}

.box-head .ico8 {
  margin-left: 2px;
}

.box-body {
  padding: 12px;
  border-top: 1px solid var(--border);
}

.featured {
  height: 59px;
  line-height: 22px;
}

.attributes {
  padding: 14px 12px 13px;
}

.attributes label {
  display: block;
  margin-bottom: 6px;
  font-weight: 500;
  line-height: 20px;
}

.select {
  position: relative;
  margin-bottom: 13px;
}

.select svg {
  position: absolute;
  top: 9px;
  right: 8px;
}

.select-parent {
  width: 214px;
}

.select-template {
  width: 110px;
}

.select, input {
  margin-left: 1px;
}

select, input {
  width: 100%;
  height: 30px;
  padding: 0 8px;
  border: 1px solid #8c8f94;
  border-radius: 4px;
  background: #fff;
  color: var(--dark-2);
  font: inherit;
  font-size: 13px;
  appearance: none;
}

select {
  display: block;
}

input {
  display: block;
  width: 74px;
}

.attributes p {
  margin-top: 14px;
  line-height: 19px;
}

.sticky {
  position: absolute;
  right: 0;
  bottom: 0;
  width: 320px;
}

.watermark {
  display: flex;
  flex-direction: column;
  padding: 0 0 0 14px;
  color: rgba(120, 120, 120, 0.5);
  font-size: 14px;
  line-height: 17px;
  white-space: nowrap;
}

.watermark strong {
  font-size: 19px;
  font-weight: 400;
  line-height: 28px;
}

.sticky-buttons {
  display: flex;
}

.sticky-buttons button {
  flex: 1;
  height: 50px;
  background: #32373c;
  color: #fff;
}

.sticky-buttons .primary {
  background: var(--blue);
}

.scrollbar {
  display: flex;
  flex-direction: column;
  align-items: center;
  flex: none;
  width: 15px;
  padding: 4px 0;
  background: #fcfcfc;
  color: #8a8a8a;
}

.track {
  flex: 1;
  padding-top: 74px;
}

.thumb {
  width: 9px;
  height: 225px;
  border-radius: 5px;
  background: #8a8a8a;
}

/* taskbar */
.taskbar {
  display: flex;
  flex: none;
  height: 13px;
  overflow: hidden;
  border-top: 1px solid #777;
  background: linear-gradient(90deg, #463b40, #44262b 50%, #3f2228);
  color: #fff;
}

.task-search {
  width: 288px;
  margin-left: 48px;
  padding-left: 215px;
  background: #f1f1f1;
}

.task-search svg {
  display: block;
  width: 64px;
  height: 12px;
}

.tasks {
  display: flex;
  margin-left: 50px;
}

.tasks span {
  width: 49px;
}

.tasks .on {
  background: #6a5b5c;
}

.tasks svg {
  display: block;
  width: 49px;
  height: 12px;
}

.tray {
  width: 24px;
  height: 12px;
  margin-left: auto;
}

.taskbar time {
  margin: 0 58px 0 237px;
  line-height: 20px;
}

.show-desktop {
  width: 5px;
  border-left: 1px solid #8d7b7f;
}
```
